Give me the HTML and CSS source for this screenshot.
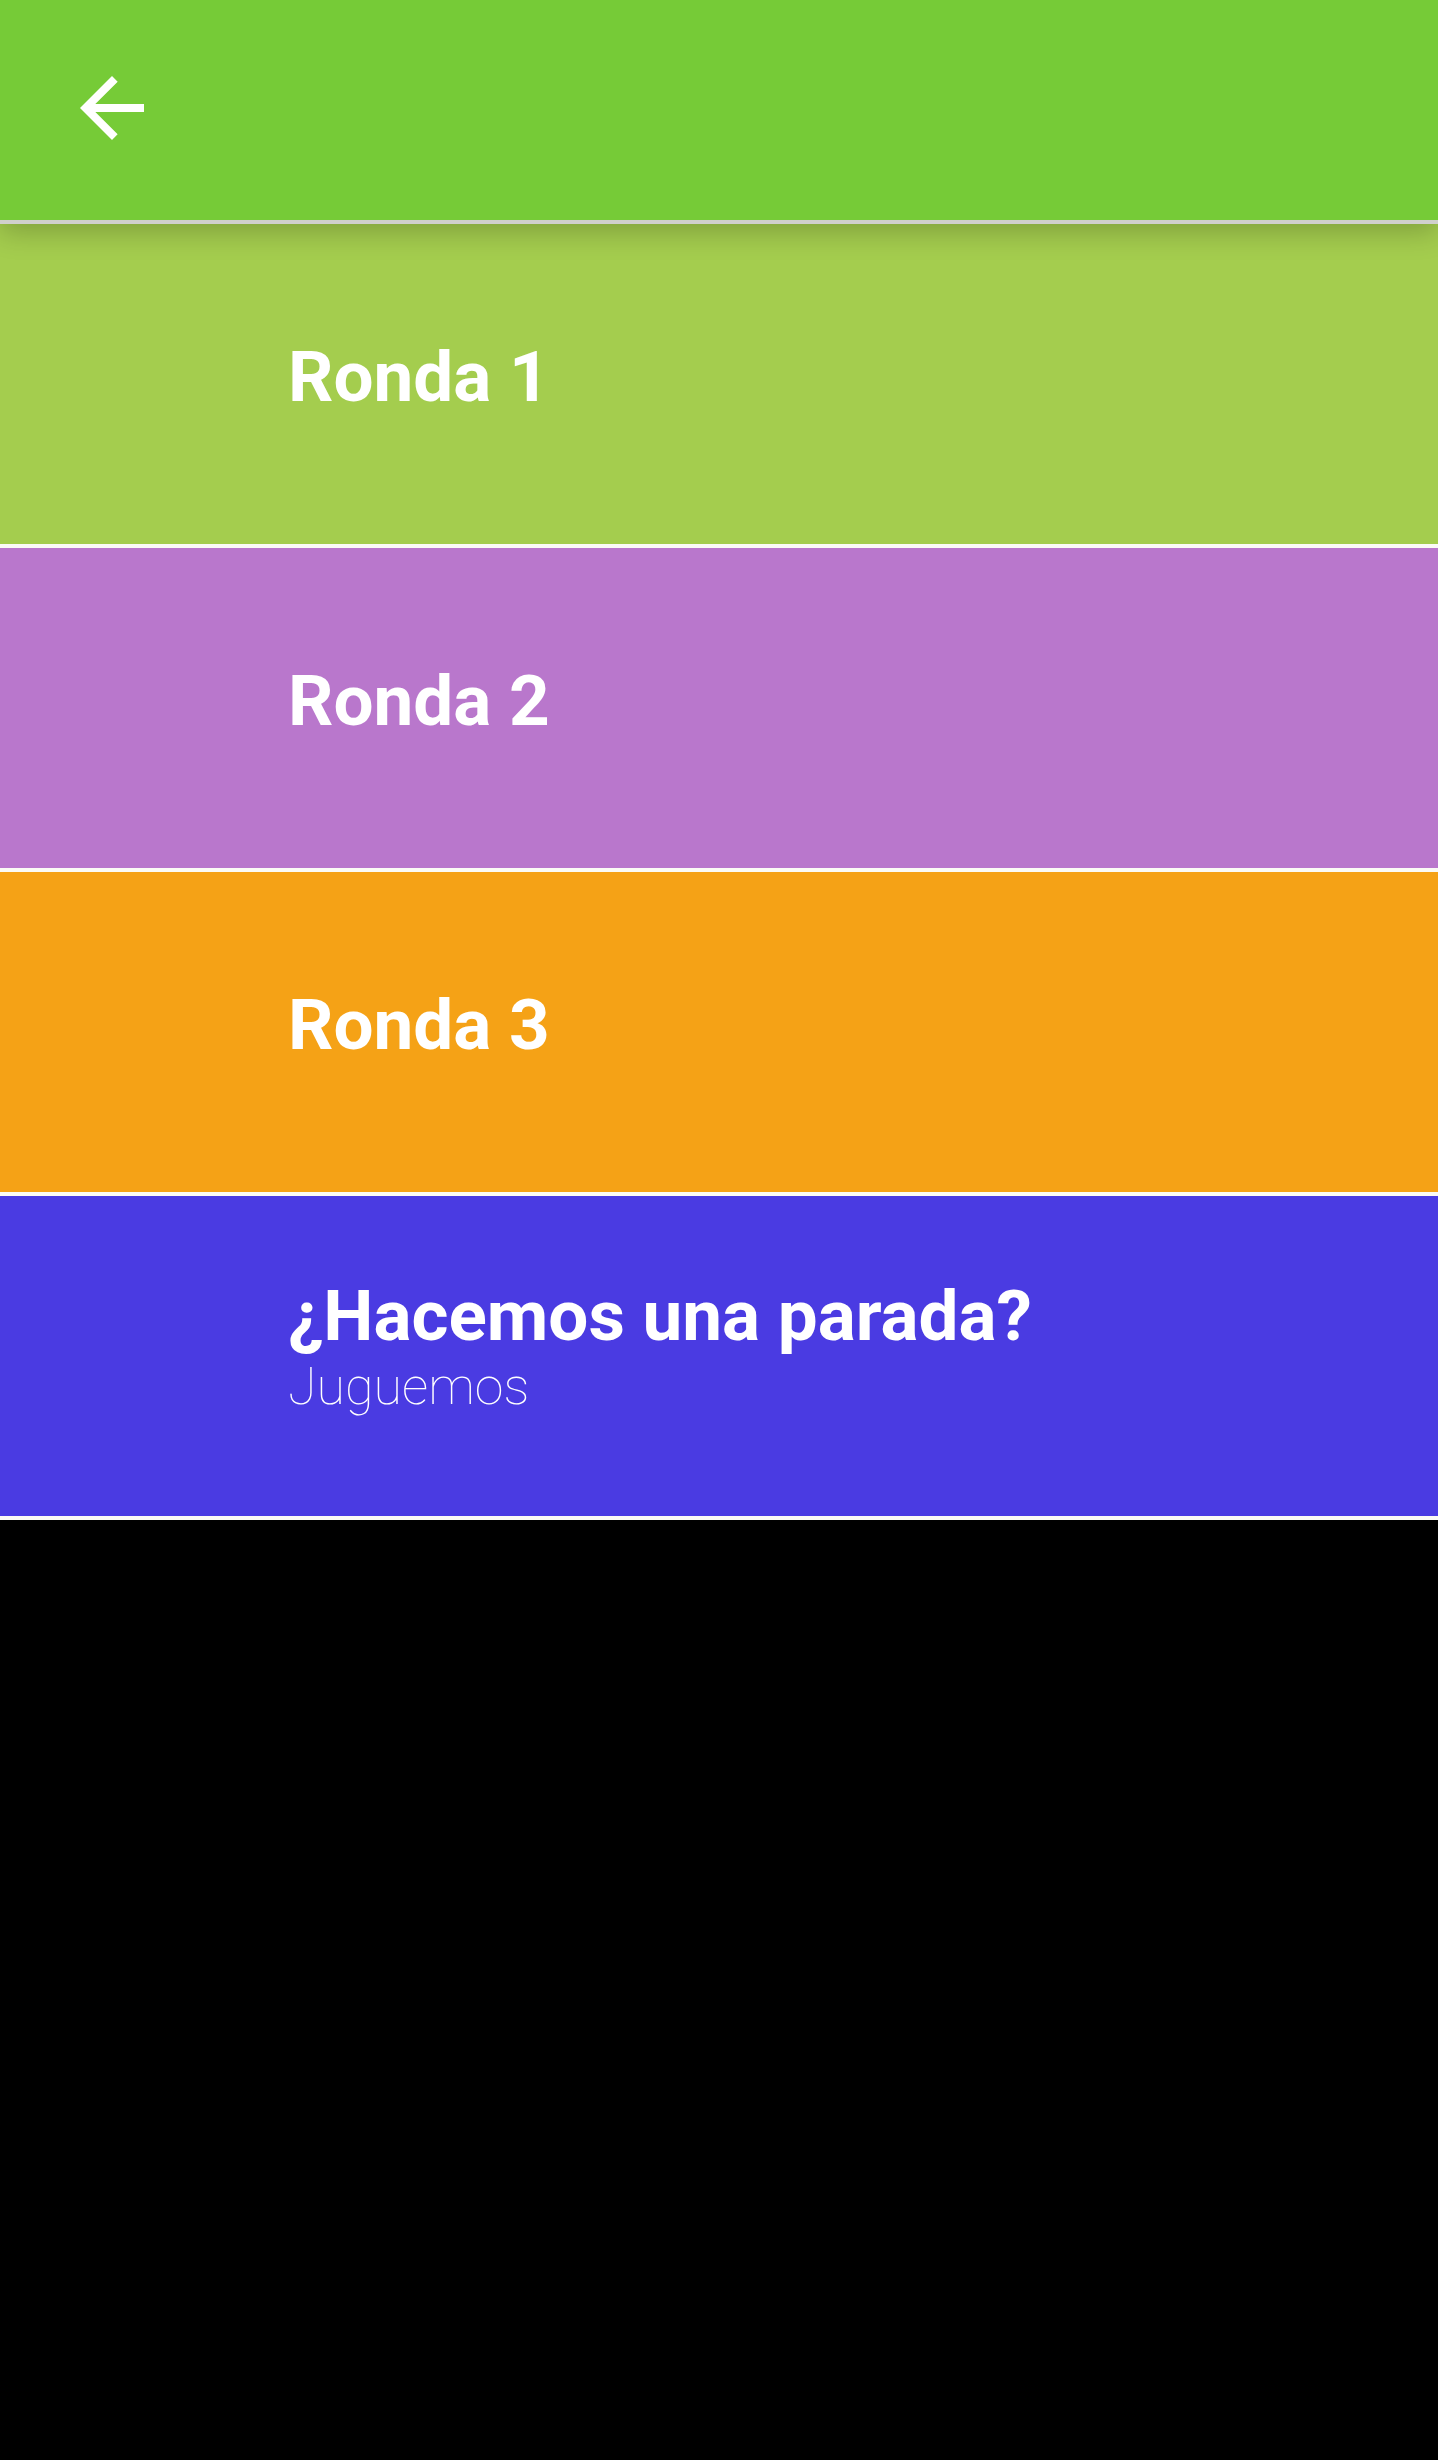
FILE: index.html
```html
<!DOCTYPE html>
<html lang="es">
<head>
    <meta charset="UTF-8">
    <meta name="viewport" content="width=device-width, initial-scale=1.0">
    <title>Rondas</title>
    <link rel="stylesheet" href="styles.css">
</head>
<body>
    <header class="toolbar">
        <button class="back-button" aria-label="Volver">
            <svg viewBox="0 0 24 24" width="96" height="96">
                <path d="M20 11H7.83l5.59-5.59L12 4l-8 8 8 8 1.41-1.41L7.83 13H20v-2z" fill="#ffffff"/>
            </svg>
        </button>
    </header>

    <ul class="round-list">
        <li class="round round-1">
            <span class="round-title">Ronda 1</span>
        </li>
        <li class="round round-2">
            <span class="round-title">Ronda 2</span>
        </li>
        <li class="round round-3">
            <span class="round-title">Ronda 3</span>
        </li>
        <li class="round round-break">
            <span class="round-title">¿Hacemos una parada?</span>
            <span class="round-subtitle">Juguemos</span>
        </li>
    </ul>
</body>
</html>
```

FILE: styles.css
```css
body {
    margin: 0;
    min-height: 2460px;
    background-color: #000000;
    font-family: Roboto, "Noto Sans", sans-serif;
    color: #ffffff;
}
.toolbar {
    position: relative;
    z-index: 1;
    display: flex;
    align-items: center;
    height: 216px;
    padding: 0 0 4px 64px;
    background-color: #76cb37; /* verde barra */
    border-bottom: 4px solid #d0d0cc;
    box-shadow: 0 8px 26px rgba(0, 0, 0, 0.22);
}
.back-button {
    display: flex;
    padding: 0;
    border: none;
    background: none;
    cursor: pointer;
}
.round-list {
    list-style: none;
    margin: 0;
    padding: 0;
}
.round {
    display: flex;
    flex-direction: column;
    justify-content: center;
    height: 306px;
    padding: 0 0 14px 288px;
    border-bottom: 4px solid #fbfbf5;
    cursor: pointer;
}
.round-1 {
    background-color: #a4cd4e;
}
.round-2 {
    background-color: #b977cc;
}
.round-3 {
    background-color: #f5a216;
}
.round-break {
    height: 300px;
    padding-bottom: 20px;
    background-color: #4a3be2;
}
.round-title {
    font-size: 71px;
    font-weight: 700;
    line-height: 1.17;
}
.round-subtitle {
    font-size: 52px;
    font-weight: 100;
    line-height: 1.17;
}
```
